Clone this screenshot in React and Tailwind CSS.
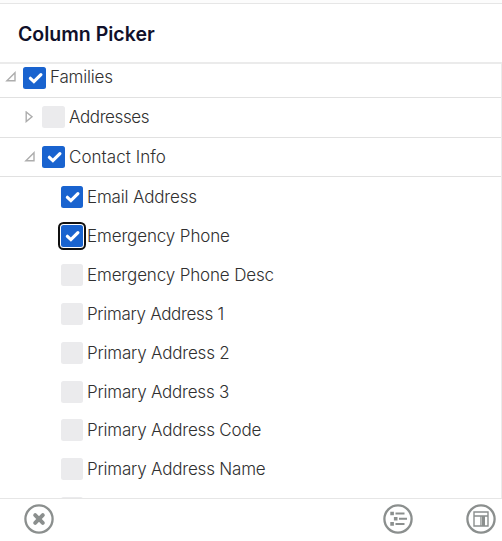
import { useState } from 'react';
import clsx from 'clsx';

const fields = [
  { id: 'email', label: 'Email Address', tracking: 'tracking-[-0.17px]' },
  { id: 'phone', label: 'Emergency Phone', tracking: 'tracking-[-0.13px]' },
  { id: 'phoneDesc', label: 'Emergency Phone Desc', tracking: 'tracking-[-0.15px]' },
  { id: 'address1', label: 'Primary Address 1', tracking: 'tracking-[-0.32px]' },
  { id: 'address2', label: 'Primary Address 2', tracking: 'tracking-[-0.2px]' },
  { id: 'address3', label: 'Primary Address 3', tracking: 'tracking-[-0.22px]' },
  { id: 'addressCode', label: 'Primary Address Code', tracking: 'tracking-[-0.2px]' },
  { id: 'addressName', label: 'Primary Address Name', tracking: 'tracking-[-0.2px]' },
];

const Checkbox = ({ checked, focused, wide, label, onClick }) => (
  <button
    role="checkbox"
    aria-checked={checked}
    aria-label={label}
    onClick={onClick}
    className={clsx(
      'flex h-[22px] shrink-0 items-center justify-center rounded-[2.5px]',
      wide ? 'w-[23px]' : 'w-[22px]',
      checked ? 'bg-[#1963cf]' : 'bg-[#ebebed]',
      focused && 'outline-2 outline-offset-1 outline-[#101010]'
    )}
  >
    {checked && (
      <svg viewBox="0 0 22 22" className="h-[22px] w-[22px]" fill="none" stroke="white" strokeWidth="3.2">
        <path d="M6.4 11.3 L9.9 14.6 L16.9 7.6" strokeLinecap="round" />
      </svg>
    )}
  </button>
);

const Arrow = ({ open }) => (
  <svg viewBox="0 0 12 12" className="h-3 w-3 shrink-0" fill="none" stroke="#adadad" strokeWidth="1.4">
    {open ? <path d="M1.9 9.7 H10 V1.7 Z" /> : <path d="M3.2 1 V10.6 L9 5.8 Z" />}
  </svg>
);

const Label = ({ children, className }) => (
  <span className={clsx('ml-1 whitespace-nowrap text-[17px] leading-[22px] font-light text-[#303030]', className)}>
    {children}
  </span>
);

const RoundButton = ({ label, children }) => (
  <button aria-label={label} className="h-[30px] w-[30px]">
    <svg viewBox="0 0 30 30" className="h-[30px] w-[30px]" fill="none" stroke="#8b8f8e">
      <circle cx="15" cy="15" r="13.6" strokeWidth="2.3" />
      {children}
    </svg>
  </button>
);

const App = () => {
  const [checked, setChecked] = useState({ families: true, contact: true, email: true, phone: true });
  const [focused, setFocused] = useState('phone');

  const toggle = (id) => {
    setChecked({ ...checked, [id]: !checked[id] });
    setFocused(id);
  };

  const box = (id, label, wide) => (
    <Checkbox checked={!!checked[id]} focused={focused === id} wide={wide} label={label} onClick={() => toggle(id)} />
  );

  return (
    <div className="flex h-[541px] w-[502px] flex-col overflow-hidden bg-white font-[Inter,'Open_Sans',sans-serif]">
      <div className="h-1 shrink-0 border-b border-[#e6e6e6] bg-[#fcfcfc]" />
      <header className="flex h-[60px] shrink-0 items-center border-b-2 border-[#ebebeb] pt-px pl-[18px]">
        <h1 className="text-[19.5px] leading-6 font-semibold text-[#10102a]">Column Picker</h1>
      </header>

      <div className="min-h-0 flex-1 overflow-hidden border-r border-[#ebebeb]">
        <div className="flex h-[34px] items-start border-b border-[#e1e1e1] pt-[3px] pl-[5px]">
          <span className="mt-1 mr-[6px]"><Arrow open /></span>
          {box('families', 'Families', true)}
          <Label className="-mt-px tracking-[-0.2px]">Families</Label>
        </div>
        <div className="flex h-10 items-center border-b border-[#e1e1e1] pb-px pl-[23px]">
          <span className="mr-[7px]"><Arrow /></span>
          {box('addresses', 'Addresses', true)}
          <Label className="tracking-[-0.4px]">Addresses</Label>
        </div>
        <div className="flex h-[39px] items-center border-b border-[#e1e1e1] pl-[24px]">
          <span className="mr-[6px]"><Arrow open /></span>
          {box('contact', 'Contact Info', true)}
          <Label className="tracking-[0.05px]">Contact Info</Label>
        </div>
        <div className="pt-[1px]">
          {fields.map((field) => (
            <div key={field.id} className="flex h-[38.85px] items-center pl-[61px]">
              {box(field.id, field.label)}
              <Label className={field.tracking}>{field.label}</Label>
            </div>
          ))}
          {/* next row, scrolled out of view except for its top edge */}
          <div className="flex items-start pt-[8.4px] pl-[61px]">{box('addressType', 'Address type')}</div>
        </div>
      </div>

      <footer className="flex h-[43px] shrink-0 items-start border-t border-[#e6e6e6] pt-[5px] pl-6">
        <RoundButton label="Close">
          <path d="M11.2 11.2 L18.8 18.8 M18.8 11.2 L11.2 18.8" strokeWidth="4" strokeLinecap="round" />
        </RoundButton>
        <div className="ml-auto flex gap-[53px] pr-[6px]">
          <RoundButton label="Expand tree">
            <path d="M7.3 9.5 H10.9 M10.9 14.7 H14.5 M7.3 19.9 H10.9" strokeWidth="3.6" />
            <path d="M12.5 9.5 H21.5 M16 14.7 H24 M12.5 19.9 H21.5" strokeWidth="2" />
          </RoundButton>
          <RoundButton label="Column layout">
            <path d="M8 8 H22 V22 H8 Z M8 12 H22" strokeWidth="1.4" />
            <path d="M14.8 12 V22" strokeWidth="1" />
            <path d="M17.3 12 V22" strokeWidth="3.4" />
          </RoundButton>
        </div>
      </footer>
    </div>
  );
};

export default App;
